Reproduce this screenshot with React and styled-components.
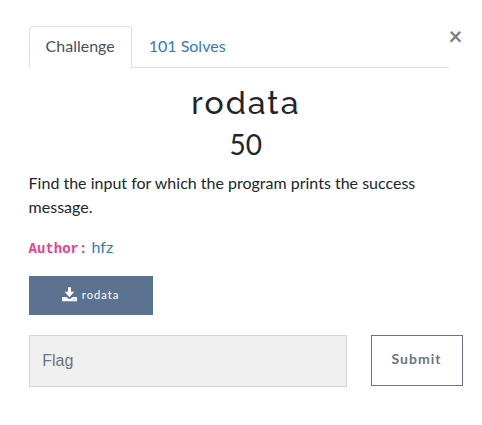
import React from "react";
import styled, { createGlobalStyle } from "styled-components";

const Global = createGlobalStyle`
  * { box-sizing: border-box; }
  body { margin: 0; background: #fff; color: #212529; font: 16px/24px Lato, sans-serif; }
`;
const Panel = styled.main`
  position: relative;
  width: 482px;
  height: 425px;
  padding: 26px 19px 0 28.6px;
`;
const Close = styled.button`
  position: absolute;
  top: 24px;
  right: 19.5px;
  padding: 0;
  border: 0;
  background: none;
  color: #7f7f7f;
  font: 700 24px/24px Lato, sans-serif;
`;
const Tabs = styled.nav`
  display: flex;
  width: 420px;
  height: 42px;
  border-bottom: 1px solid #dee2e6;
`;
const Tab = styled.a`
  height: 42px;
  padding: 7px 16px;
  border: 1px solid transparent;
  border-color: ${p => (p.$active ? "#dee2e6 #dee2e6 #fff" : "transparent")};
  border-radius: 4px 4px 0 0;
  color: ${p => (p.$active ? "#495057" : "#337ab7")};
`;
const Title = styled.h2`
  margin: 16px 0 0;
  text-align: center;
  font: 500 32px/38px Raleway, Lato, sans-serif;
  letter-spacing: 2px;
`;
const Points = styled.h3`
  margin: 5px 0 0;
  text-align: center;
  font: 400 28px/34px Lato, sans-serif;
`;
const Text = styled.p`
  margin: 10px 0 0;
  width: 420px;
`;
const Author = styled.p`
  margin: 16px 0 0;
`;
const Code = styled.code`
  color: #e83e8c;
  font: 700 14px "Liberation Mono", monospace;
`;
const Link = styled.a`
  color: #337ab7;
`;
const Download = styled.a`
  display: flex;
  align-items: center;
  justify-content: center;
  gap: 5px;
  width: 124px;
  height: 39px;
  margin-top: 17px;
  padding-bottom: 1px;
  background: #5b7290;
  color: #fff;
  font-size: 11.2px;
  letter-spacing: 1px;
`;
const DownloadIcon = styled.svg`
  width: 15px;
  height: 15px;
  margin-top: -2px;
`;
const Form = styled.form`
  display: flex;
  justify-content: space-between;
  margin-top: 20px;
`;
const Input = styled.input`
  width: 318px;
  height: 52px;
  padding: 0 12.6px;
  border: 1px solid #ced4da;
  border-radius: 0;
  background: #f0f0f0;
  font: 16px "Liberation Sans", sans-serif;
  &::placeholder { color: #6c757d; opacity: 1; }
`;
const Submit = styled.button`
  width: 92px;
  height: 51px;
  padding: 0 1px 4px 0;
  border: 1px solid #6c757d;
  background: #fff;
  color: #6c757d;
  font: 700 14px Lato, sans-serif;
  letter-spacing: 1px;
`;

export default function App() {
  return (
    <Panel>
      <Global />
      <Close aria-label="Close">×</Close>
      <Tabs>
        <Tab $active>Challenge</Tab>
        <Tab>101 Solves</Tab>
      </Tabs>
      <Title>rodata</Title>
      <Points>50</Points>
      <Text>Find the input for which the program prints the success message.</Text>
      <Author><Code>Author:</Code> <Link>hfz</Link></Author>
      <Download>
        <DownloadIcon viewBox="0 0 15 15" fill="currentColor">
          <path d="M6 .2h3v4.600h3.300L7.500 10.200 2.700 4.800H6zM.6 10H4.300l2.300 1.800q.9.600 1.800 0L10.700 10h3.700q.6 0 .6.600v3q0 .6-.6.600H.6q-.6 0-.6-.6v-3q0-.6.600-.6zM11 12.300v.8h.8v-.8zm1.700 0v.8h.8v-.8z" fillRule="evenodd" />
        </DownloadIcon>
        rodata
      </Download>
      <Form>
        <Input placeholder="Flag" />
        <Submit type="button">Submit</Submit>
      </Form>
    </Panel>
  );
}
